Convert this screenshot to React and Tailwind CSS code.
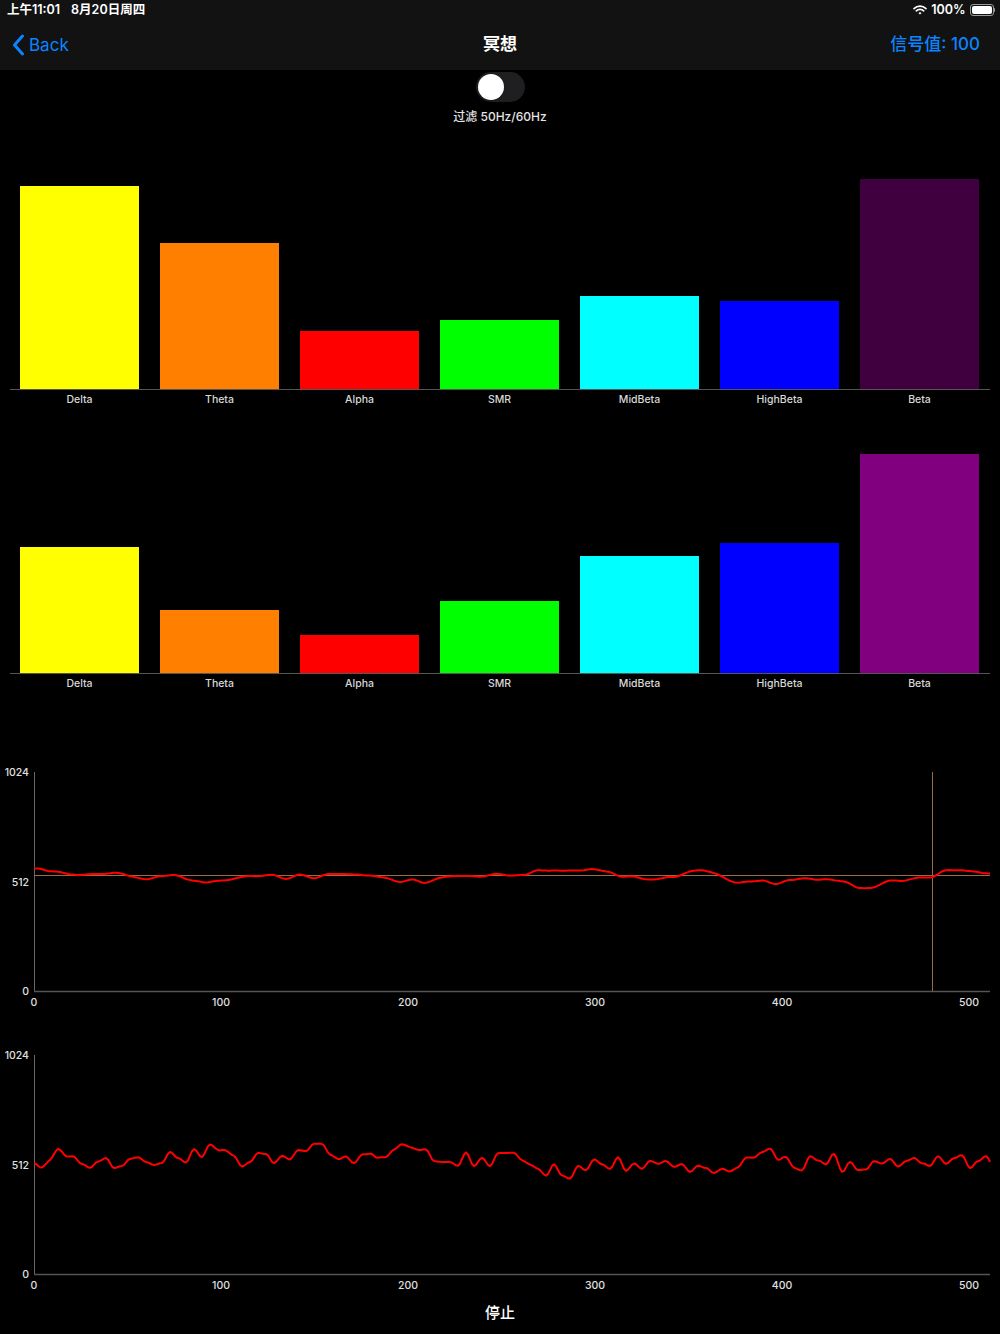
import React from "react";

function rng(seed) {
  let a = seed;
  return function () {
    a |= 0;
    a = (a + 0x6d2b79f5) | 0;
    let t = Math.imul(a ^ (a >>> 15), 1 | a);
    t = (t + Math.imul(t ^ (t >>> 7), 61 | t)) ^ t;
    return ((t ^ (t >>> 14)) >>> 0) / 4294967296;
  };
}

function interp(keys, x) {
  for (let i = 0; i < keys.length - 1; i++) {
    const [x0, y0] = keys[i];
    const [x1, y1] = keys[i + 1];
    if (x >= x0 && x <= x1) {
      const t = (x - x0) / (x1 - x0);
      const s = t * t * (3 - 2 * t);
      return y0 + (y1 - y0) * s;
    }
  }
  return keys[keys.length - 1][1];
}

function makeWave(keys, seed, knotStep, amp, offsetY) {
  const r = rng(seed);
  const knots = [];
  for (let x = 34 - knotStep; x <= 1000 + knotStep; x += knotStep) {
    knots.push([x, (r() * 2 - 1) * amp]);
  }
  const pts = [];
  for (let x = 34; x <= 990; x += 2) {
    let n = 0;
    for (let i = 0; i < knots.length - 1; i++) {
      if (x >= knots[i][0] && x <= knots[i + 1][0]) {
        const t = (x - knots[i][0]) / knotStep;
        const s = t * t * (3 - 2 * t);
        n = knots[i][1] + (knots[i + 1][1] - knots[i][1]) * s;
        break;
      }
    }
    pts.push([x, interp(keys, x) + n - offsetY]);
  }
  return pts.map((p, i) => (i === 0 ? "M" : "L") + p[0] + " " + p[1].toFixed(1)).join(" ");
}

const wave1 = makeWave(
  [
    [34, 872], [45, 869], [80, 876], [110, 875], [150, 879], [180, 878], [210, 884],
    [260, 877], [330, 877], [380, 878], [410, 883], [460, 876], [500, 874], [540, 874],
    [580, 872], [620, 876], [650, 881], [700, 870], [740, 885], [790, 882], [820, 880],
    [860, 888], [900, 880], [932, 876], [960, 871], [990, 872],
  ],
  7, 14, 3, 761
);

const wave2 = makeWave(
  [
    [34, 1165], [60, 1155], [80, 1163], [150, 1163], [200, 1157], [210, 1153], [240, 1163],
    [320, 1152], [350, 1162], [400, 1150], [440, 1160], [500, 1160], [565, 1173],
    [600, 1165], [650, 1163], [700, 1170], [770, 1156], [800, 1165], [830, 1160],
    [850, 1168], [900, 1165], [940, 1160], [990, 1165],
  ],
  42, 8, 8, 1044
);

const bars1 = [
  ["Delta", 203, "bg-[#ffff00]"],
  ["Theta", 146, "bg-[#ff8000]"],
  ["Alpha", 58, "bg-[#ff0000]"],
  ["SMR", 69, "bg-[#00ff00]"],
  ["MidBeta", 93, "bg-[#00ffff]"],
  ["HighBeta", 88, "bg-[#0000ff]"],
  ["Beta", 210, "bg-[#400040]"],
];
const bars2 = [
  ["Delta", 126, "bg-[#ffff00]"],
  ["Theta", 63, "bg-[#ff8000]"],
  ["Alpha", 38, "bg-[#ff0000]"],
  ["SMR", 72, "bg-[#00ff00]"],
  ["MidBeta", 117, "bg-[#00ffff]"],
  ["HighBeta", 130, "bg-[#0000ff]"],
  ["Beta", 219, "bg-[#800080]"],
];

function BarChart({ bars, height }) {
  return (
    <div>
      <div className="flex items-end gap-[21px] px-[20px]" style={{ height }}>
        {bars.map(([name, h, c]) => (
          <div key={name} className={"w-[119px] " + c} style={{ height: h }} />
        ))}
      </div>
      <div className="mx-[10px] border-t border-[#555]">
        <div className="flex gap-[21px] px-[10px]">
          {bars.map(([name]) => (
            <div
              key={name}
              className="w-[119px] h-[20px] text-center text-[10.5px] leading-[20px] font-medium text-[#d8d8d8]"
            >
              {name}
            </div>
          ))}
        </div>
      </div>
    </div>
  );
}

function LineChart({ path, markers }) {
  const xs = [0, 100, 200, 300, 400, 500];
  return (
    <svg width="1000" height="260" className="block">
      <line x1="34.5" y1="12" x2="34.5" y2="231" stroke="#666" strokeWidth="1" />
      <line x1="34" y1="231.5" x2="990" y2="231.5" stroke="#555" strokeWidth="1.5" />
      {markers && (
        <g stroke="#9a6a45" strokeWidth="1">
          <line x1="34" y1="115.5" x2="990" y2="115.5" />
          <line x1="932.5" y1="12" x2="932.5" y2="231" />
        </g>
      )}
      <path d={path} fill="none" stroke="#ff0000" strokeWidth="2" strokeLinejoin="round" />
      <g fill="#e0e0e0" fontSize="10.5" fontFamily="Inter, 'Noto Sans', sans-serif" fontWeight="500">
        <text x="29" y="15.5" textAnchor="end">1024</text>
        <text x="29" y="125.5" textAnchor="end">512</text>
        <text x="29" y="234.5" textAnchor="end">0</text>
        {xs.map((v) => (
          <text key={v} x={34 + v * 1.87} y="246" textAnchor="middle">
            {v}
          </text>
        ))}
      </g>
    </svg>
  );
}

export default function App() {
  return (
    <div
      className="w-[1000px] h-[1334px] bg-black text-white overflow-hidden"
      style={{ fontFamily: "Inter, 'Noto Sans CJK SC', sans-serif" }}
    >
      <div className="bg-[#121212] h-[70px]">
        <div className="h-[20px] flex items-center justify-between pl-[7px] pr-[5px]">
          <div className="flex gap-[11px] text-[12.5px] font-semibold leading-none">
            <span>上午11:01</span>
            <span>8月20日周四</span>
          </div>
          <div className="flex items-center gap-[4px]">
            <svg width="14" height="10" viewBox="0 0 14 10">
              <path d="M1 3.6 A8.5 8.5 0 0 1 13 3.6" stroke="white" strokeWidth="1.6" fill="none" strokeLinecap="round" />
              <path d="M3.3 5.9 A5.2 5.2 0 0 1 10.7 5.9" stroke="white" strokeWidth="1.6" fill="none" strokeLinecap="round" />
              <path d="M5.4 8 L7 9.6 L8.6 8 A2.3 2.3 0 0 0 5.4 8 Z" fill="white" />
            </svg>
            <span className="text-[12.5px] font-semibold leading-none">100%</span>
            <div className="flex items-center">
              <div className="w-[24px] h-[12px] rounded-[3px] border border-[#999] p-[1px]">
                <div className="w-full h-full bg-white rounded-[2px]" />
              </div>
              <div className="w-[1.5px] h-[4px] bg-[#999] rounded-r-sm" />
            </div>
          </div>
        </div>
        <div className="h-[50px] flex items-center justify-between px-[12px] relative">
          <div className="flex items-center gap-[4px] text-[#0a84ff]">
            <svg width="13" height="22" viewBox="0 0 13 22">
              <path d="M10.5 2 L2.5 11 L10.5 20" stroke="#0a84ff" strokeWidth="3" fill="none" strokeLinecap="round" strokeLinejoin="round" />
            </svg>
            <span className="text-[17px] leading-none">Back</span>
          </div>
          <div className="absolute left-1/2 -translate-x-1/2 text-[17px] font-semibold">冥想</div>
          <div className="text-[17px] font-medium text-[#0a84ff] pr-[8px]">信号值: 100</div>
        </div>
      </div>

      <div className="flex justify-center mt-[2px]">
        <div className="w-[49px] h-[30px] rounded-full bg-[#1f1f21] p-[2px]">
          <div className="w-[26px] h-[26px] rounded-full bg-white shadow" />
        </div>
      </div>
      <div className="mt-[7px] h-[16px] text-center text-[12px] leading-[16px] font-medium text-[#e5e5e5]">
        过滤 50Hz/60Hz
      </div>

      <BarChart bars={bars1} height={264} />
      <BarChart bars={bars2} height={263} />

      <div className="h-[66px]" />
      <LineChart path={wave1} markers />
      <div className="h-[23px]" />
      <LineChart path={wave2} />
      <div className="h-[20px] text-center text-[15px] leading-[20px] font-medium">停止</div>
    </div>
  );
}
